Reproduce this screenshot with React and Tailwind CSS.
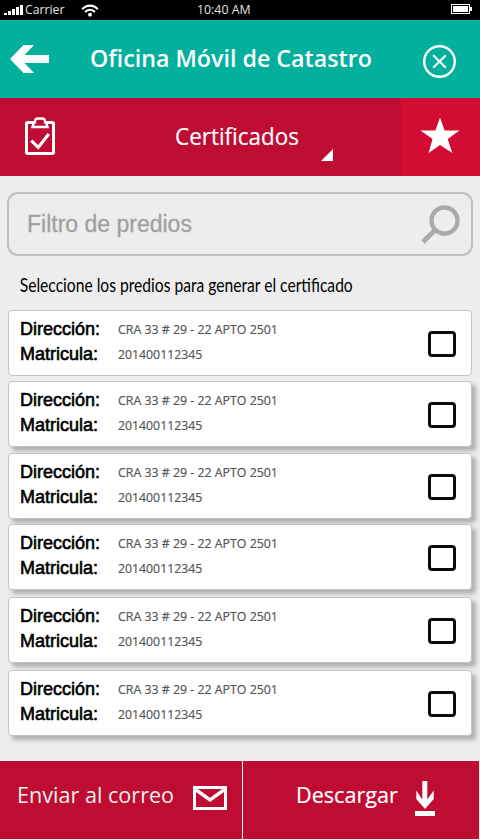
const SANS = "font-['Open_Sans','Noto_Sans',sans-serif]";
const ARIAL = "font-['Liberation_Sans',Arial,sans-serif]";

const RAISED = "shadow-[4px_4px_4px_rgba(0,0,0,0.26)]";

const predios = [
  { gap: "", shadow: "" },
  { gap: "mt-[5px]", shadow: RAISED },
  { gap: "mt-[6px]", shadow: RAISED },
  { gap: "mt-[5px]", shadow: RAISED },
  { gap: "mt-[7px]", shadow: RAISED },
  { gap: "mt-[7px]", shadow: RAISED },
];

function StatusBar() {
  return (
    <div className="flex h-5 items-center bg-black text-[13px] leading-5 text-[#e4e4e4]">
      <svg className="ml-1 h-[10px] w-[19px]" viewBox="0 0 19 10" fill="#fff" shapeRendering="crispEdges">
        <rect x="0" y="8" width="3" height="2" />
        <rect x="4" y="6" width="3" height="4" />
        <rect x="8" y="4" width="3" height="6" />
        <rect x="12" y="2" width="3" height="8" />
        <rect x="16" y="0" width="3" height="10" />
      </svg>
      <span className="ml-[2px] w-[56px] origin-left scale-x-[0.94] pb-[2px]">Carrier</span>
      <svg className="h-[13px] w-[18px]" viewBox="0 0 18 13" fill="none" stroke="#fff" strokeWidth="2.1">
        <path d="M1.2 5.2 C5.6 0.4 12.4 0.4 16.8 5.2" />
        <path d="M4.1 8 C7 5 11 5 13.9 8" />
        <circle cx="9" cy="10.7" r="1.9" fill="#fff" stroke="none" />
      </svg>
      <span className="ml-[98px] origin-left scale-x-[0.95] whitespace-nowrap pb-[2px]">10:40 AM</span>
      <svg className="mr-2 mb-[2px] ml-auto h-[10px] w-[21px]" viewBox="0 0 21 10" shapeRendering="crispEdges">
        <rect x="0.5" y="0.5" width="18" height="9" fill="none" stroke="#fff" />
        <rect x="2" y="2" width="15" height="6" fill="#fff" />
        <rect x="19" y="3" width="2" height="4" fill="#fff" />
      </svg>
    </div>
  );
}

function Header() {
  return (
    <header className="flex h-[78px] items-center bg-[#03b09d] pl-[10px] text-white">
      <svg className="h-7 w-[39px]" viewBox="0 0 39 28" fill="#fff">
        <path d="M13.5 0 H24 L14.5 10 H39 V18 H14.5 L24 28 H13.5 L0 14 Z" />
      </svg>
      <h1 className="ml-[41px] w-[332px] origin-left scale-x-[0.968] whitespace-nowrap pb-[3px] text-[24px] leading-8 font-semibold">
        Oficina Móvil de Catastro
      </h1>
      <svg className="mt-[5px] h-[34px] w-[34px]" viewBox="0 0 34 34" fill="none" stroke="#fff">
        <circle cx="17.5" cy="16.5" r="15.3" strokeWidth="2.4" />
        <path d="M11.2 10.2 L23.8 22.8 M23.8 10.2 L11.2 22.8" strokeWidth="2" />
      </svg>
    </header>
  );
}

function Toolbar() {
  return (
    <nav className="flex h-[78px] bg-[#bf0c33] text-white">
      <div className="flex flex-1 items-center pl-[25px]">
        <svg className="mb-[2px] h-[38px] w-[30px]" viewBox="0 0 30 38" fill="none" stroke="#fff">
          <rect x="1.5" y="5.5" width="27" height="31" rx="1.2" strokeWidth="3" />
          <path d="M7.5 10 L8.6 6.4 Q9 5.4 10 5.4 Q9.8 1.5 12.6 1.5 H17.4 Q20.2 1.5 20 5.4 Q21 5.4 21.4 6.4 L22.5 10 Z" fill="#bf0c33" strokeWidth="2.4" />
          <path d="M6.3 23.6 L13.2 30.4 L23.8 17" strokeWidth="3.1" />
        </svg>
        <span className="ml-[120px] w-[151px] origin-left scale-x-[0.935] pb-[3px] text-[24px] leading-8 [-webkit-text-stroke:0.2px_#fff]">Certificados</span>
        <svg className="-ml-[5px] mt-[36px] h-3 w-3" viewBox="0 0 12 12" fill="#fff">
          <path d="M12 0 V12 H0 Z" />
        </svg>
      </div>
      <div className="flex w-[79px] items-center justify-center bg-[#d30c33]">
        <svg className="mr-px mb-[4px] h-[37px] w-10" viewBox="0 0 40 37" fill="#fff">
          <path d="M20 0.5 L24.6 13.4 H39.4 L27.7 22 L32.3 36 L20 28 L8.6 36 L12.5 22 L0.6 13.4 H15.4 Z" />
        </svg>
      </div>
    </nav>
  );
}

function SearchBox() {
  return (
    <div className="mx-[7px] mt-4 flex h-16 items-center rounded-[11px] border-2 border-[#c0c0c0] pr-[11px] pl-[18px]">
      <span className={`flex-1 text-[23px] leading-8 text-[#a0a0a0] [-webkit-text-stroke:0.3px_#a0a0a0] ${ARIAL}`}>Filtro de predios</span>
      <svg className="h-[39px] w-[39px]" viewBox="0 0 39 39" fill="none" stroke="#aaa">
        <circle cx="23.5" cy="15.5" r="13" strokeWidth="4.4" />
        <path d="M14.5 24.5 L2 37" strokeWidth="5" />
      </svg>
    </div>
  );
}

function Predio({ gap, shadow }) {
  return (
    <li className={`flex h-[66px] w-[464px] items-center rounded border border-[#c4c4c4] bg-white pr-[15px] pl-[11px] ${gap} ${shadow}`}>
      <dl className="grid flex-1 grid-cols-[98px_1fr] pb-[2px] leading-[25px]">
        <dt className={`text-[18px] text-black [-webkit-text-stroke:0.6px_#000] ${ARIAL}`}>Dirección:</dt>
        <dd className="origin-left scale-x-[0.95] text-[13px] whitespace-nowrap text-[#555] [-webkit-text-stroke:0.2px_#555]">CRA 33 # 29 - 22 APTO 2501</dd>
        <dt className={`text-[18px] text-black [-webkit-text-stroke:0.6px_#000] ${ARIAL}`}>Matricula:</dt>
        <dd className="origin-left scale-x-[0.945] text-[13px] whitespace-nowrap text-[#555] [-webkit-text-stroke:0.2px_#555]">201400112345</dd>
      </dl>
      <span className="mt-[2px] h-[26px] w-[28px] rounded-[4px] border-[3px] border-[#0a0a0a] bg-white" />
    </li>
  );
}

function Footer() {
  return (
    <footer className="mr-px mb-px flex h-[78px] bg-[#bf0c33] text-[22.5px] leading-8">
      <div className="flex w-[242px] items-center pl-[17px] text-[#f0f0f0]">
        <span className="w-[176px] origin-left scale-x-[0.96] pb-[10px] whitespace-nowrap">Enviar al correo</span>
        <svg className="mb-1 h-6 w-[34px]" viewBox="0 0 34 24" fill="none" stroke="#fff">
          <rect x="1.5" y="1.5" width="31" height="21" strokeWidth="3" />
          <path d="M2.5 3.5 L17 14 L31.5 3.5" strokeWidth="3.4" />
        </svg>
      </div>
      <div className="flex flex-1 items-center border-l border-white pl-[53px] text-white">
        <span className="w-[119px] origin-left scale-x-[0.96] pb-[10px] [-webkit-text-stroke:0.2px_#fff]">Descargar</span>
        <svg className="mb-1 h-[35px] w-5" viewBox="0 0 20 35" fill="#fff">
          <path d="M7.3 0 H12.3 V18.5 L18.7 9.5 V18 L10 28 L1.3 18 V9.5 L7.3 18.5 Z" />
          <rect x="0" y="30" width="20" height="5" />
        </svg>
      </div>
    </footer>
  );
}

export default function App() {
  return (
    <div className={`flex h-[840px] w-[480px] flex-col overflow-hidden bg-[#ededed] ${SANS}`}>
      <StatusBar />
      <Header />
      <Toolbar />
      <main className="flex-1">
        <SearchBox />
        <p className="flex h-[54px] origin-left scale-x-[0.822] items-center pt-1 pl-[24px] font-['Lato',sans-serif] text-[19px] whitespace-nowrap text-black">
          Seleccione los predios para generar el certificado
        </p>
        <ul className="pl-2">
          {predios.map((p, i) => (
            <Predio key={i} {...p} />
          ))}
        </ul>
      </main>
      <Footer />
    </div>
  );
}
